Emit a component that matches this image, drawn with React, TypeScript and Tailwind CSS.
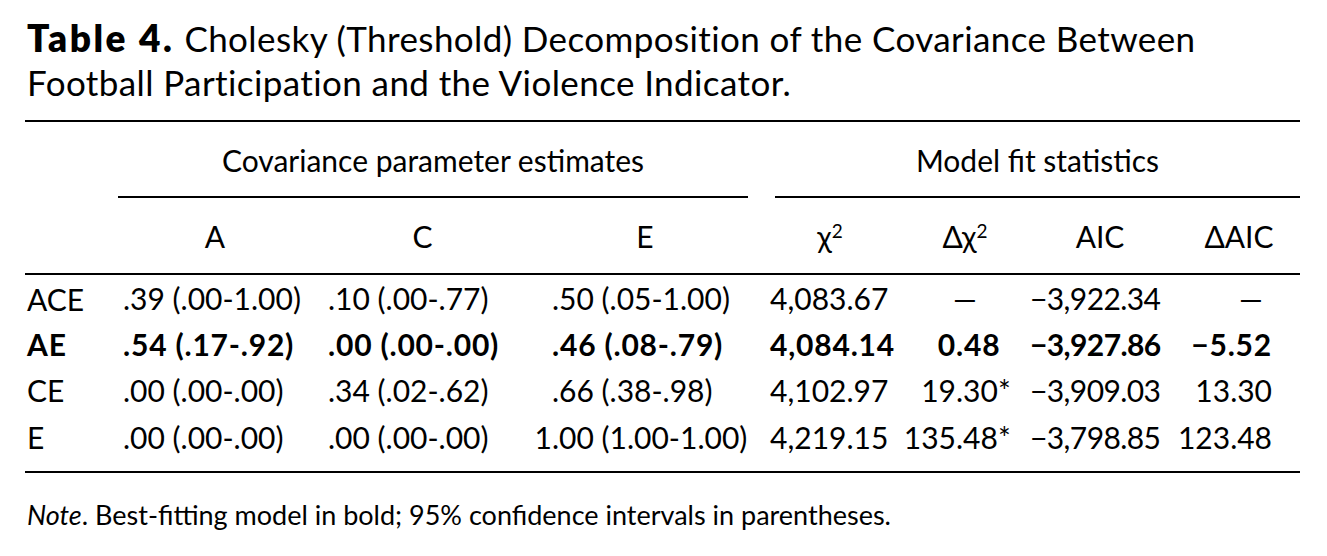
import React from "react";

const font = { fontFamily: "Lato, 'Open Sans', sans-serif" };

type Row = {
  label: string;
  bold?: boolean;
  a: string;
  c: string;
  eInt: string;
  eRest: string;
  chi: string;
  dchiInt: string;
  dchiRest: string;
  dchiStar?: boolean;
  aic: string;
  daic: string;
};

const rows: Row[] = [
  { label: "ACE", a: ".39 (.00-1.00)", c: ".10 (.00-.77)", eInt: "", eRest: ".50 (.05-1.00)", chi: "4,083.67", dchiInt: "—", dchiRest: "", aic: "−3,922.34", daic: "—" },
  { label: "AE", bold: true, a: ".54 (.17-.92)", c: ".00 (.00-.00)", eInt: "", eRest: ".46 (.08-.79)", chi: "4,084.14", dchiInt: "0", dchiRest: ".48", aic: "−3,927.86", daic: "−5.52" },
  { label: "CE", a: ".00 (.00-.00)", c: ".34 (.02-.62)", eInt: "", eRest: ".66 (.38-.98)", chi: "4,102.97", dchiInt: "19", dchiRest: ".30", dchiStar: true, aic: "−3,909.03", daic: "13.30" },
  { label: "E", a: ".00 (.00-.00)", c: ".00 (.00-.00)", eInt: "1", eRest: ".00 (1.00-1.00)", chi: "4,219.15", dchiInt: "135", dchiRest: ".48", dchiStar: true, aic: "−3,798.85", daic: "123.48" },
];

export default function App() {
  return (
    <div className="w-[1327px] h-[556px] bg-white text-black overflow-hidden" style={font}>
      <div className="pt-[16px] pl-[27px] text-[35px] leading-[44px] whitespace-nowrap">
        <span className="font-extrabold text-[37px] tracking-[2.5px]">Table 4.</span>
        <span className="ml-[10px] tracking-[0.4px]">Cholesky (Threshold) Decomposition of the Covariance Between</span>
        <br />
        <span className="tracking-[0.4px]">Football Participation and the Violence Indicator.</span>
      </div>
      <div className="ml-[25px] w-[1275px] mt-[16px] border-t-2 border-black">
        <table className="w-full table-fixed border-collapse text-[30px]">
          <colgroup>
            <col className="w-[90px]" />
            <col className="w-[200px]" />
            <col className="w-[215px]" />
            <col className="w-[230px]" />
            <col className="w-[140px]" />
            <col className="w-[130px]" />
            <col className="w-[140px]" />
            <col className="w-[130px]" />
          </colgroup>
          <thead>
            <tr>
              <td></td>
              <td colSpan={3} className="p-0 pt-[20px] text-center">
                <div className="ml-[3px] mr-[12px] pb-[18px] border-b-2 border-black leading-[36px]">
                  Covariance parameter estimates
                </div>
              </td>
              <td colSpan={4} className="p-0 pt-[20px] text-center">
                <div className="ml-[15px] pb-[18px] border-b-2 border-black leading-[36px]">
                  Model fit statistics
                </div>
              </td>
            </tr>
            <tr className="border-b-2 border-black leading-[36px]">
              <td></td>
              <td className="text-center h-[76px]">A</td>
              <td className="text-center">C</td>
              <td className="text-center">E</td>
              <td className="text-center">
                χ<sup className="text-[19px]">2</sup>
              </td>
              <td className="text-center">
                Δχ<sup className="text-[19px]">2</sup>
              </td>
              <td className="text-center">AIC</td>
              <td className="text-center pl-[8px]">ΔAIC</td>
            </tr>
          </thead>
          <tbody>
            {rows.map((r, i) => (
              <tr
                key={r.label}
                className={`${r.bold ? "font-bold tracking-[0.8px]" : ""} h-[46.5px] align-middle leading-[36px]`}
              >
                <td className={`pl-[2px] ${i === 0 ? "pt-[2px]" : ""}`}>{r.label}</td>
                <td className="pl-[8px] whitespace-nowrap">{r.a}</td>
                <td className="pl-[13px] whitespace-nowrap">{r.c}</td>
                <td className="whitespace-nowrap">
                  <span className="inline-block w-[22px] text-right">{r.eInt}</span>
                  {r.eRest}
                </td>
                <td className="pl-[10px] whitespace-nowrap">{r.chi}</td>
                <td className="whitespace-nowrap">
                  {r.dchiInt === "—" ? (
                    <div className="text-center">—</div>
                  ) : (
                    <>
                      <span className="inline-block w-[56px] text-right">{r.dchiInt}</span>
                      {r.dchiRest}
                      {r.dchiStar ? <span>*</span> : null}
                    </>
                  )}
                </td>
                <td className="whitespace-nowrap tracking-[-0.6px]">{r.aic}</td>
                <td className="whitespace-nowrap">
                  {r.daic === "—" ? (
                    <div className="text-center pl-[32px]">—</div>
                  ) : (
                    <div className="text-right pr-[28px]">{r.daic}</div>
                  )}
                </td>
              </tr>
            ))}
            <tr className="h-[12px] border-b-2 border-black">
              <td colSpan={8}></td>
            </tr>
          </tbody>
        </table>
        <div className="pt-[24px] pl-[2px] text-[27px] leading-[36px] whitespace-nowrap">
          <span className="italic">Note</span>. Best-fitting model in bold; 95% confidence intervals in parentheses.
        </div>
      </div>
    </div>
  );
}
